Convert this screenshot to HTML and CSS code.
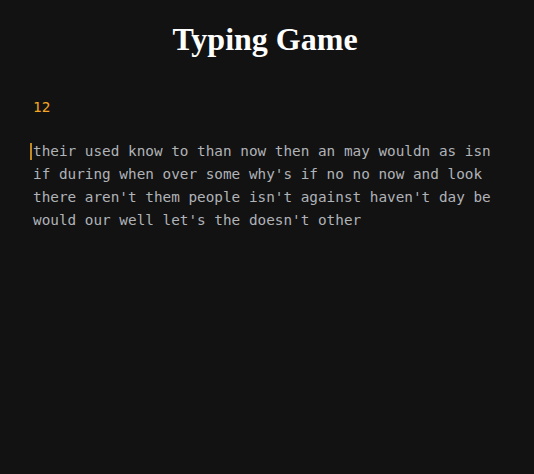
FILE: index.html
```html
<!DOCTYPE html>
<html>
<head>
<meta charset="utf-8">
<link rel="stylesheet" href="styles.css">
</head>
<body>
<h1 class="title">Typing Game</h1>
<main class="game">
  <div class="score">12</div>
  <div class="words"><span class="cursor"></span>their used know to than now then an may wouldn as isn if during when over some why's if no no now and look there aren't them people isn't against haven't day be would our well let's the doesn't other</div>
</main>
</body>
</html>
```
FILE: styles.css
```css
html, body {
  margin: 0;
  background: #121212;
  height: 100%;
}
.title {
  font-family: "Liberation Serif", serif;
  font-size: 32px;
  font-weight: bold;
  color: #ffffff;
  text-align: center;
  margin: 21px 0 0;
  padding-right: 4px;
  line-height: 37px;
}
.game {
  padding: 0 33px;
  font-family: "DejaVu Sans Mono", monospace;
  font-size: 14.35px;
  display: flex;
  flex-direction: column;
}
.score {
  color: #f5a623;
  margin-top: 38px;
  line-height: 23px;
}
.words {
  margin-top: 21px;
  color: #b0b3b8;
  line-height: 23px;
  max-width: 470px;
  position: relative;
}
.cursor {
  position: absolute;
  left: -3px;
  top: 3px;
  width: 2px;
  height: 17px;
  background: #c08a20;
}
```
